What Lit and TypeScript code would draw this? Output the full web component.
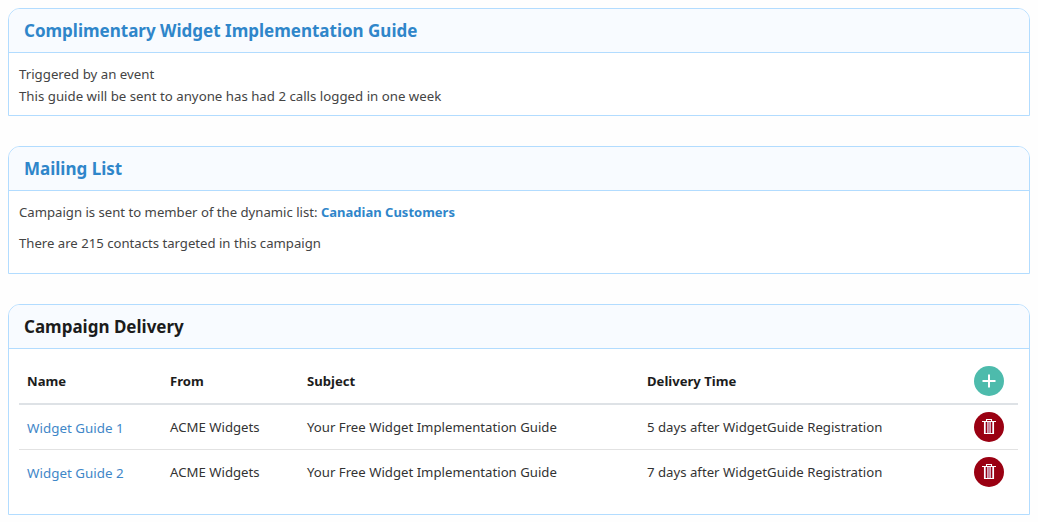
import { LitElement, html, css, svg } from "lit";
import { customElement } from "lit/decorators.js";

const rows = [
  { name: "Widget Guide 1", days: "5 days after WidgetGuide Registration" },
  { name: "Widget Guide 2", days: "7 days after WidgetGuide Registration" },
];

const trash = svg`<rect x="6" y="5" width="8" height="11" fill="#d9a9bd"/><rect x="7" y="5" width="1" height="11" fill="#9a0012"/><rect x="9.5" y="5" width="1" height="11" fill="#b5667f"/><rect x="12" y="5" width="1" height="11" fill="#9a0012"/><path d="M3 4.5H17M7.5 4V2.5H12.5V4M5.5 4.5V16.5H14.5V4.5" fill="none" stroke="#fff" stroke-width="1.1"/>`;

@customElement("app-root")
export class AppRoot extends LitElement {
  static styles = css`
    :host {
      display: block;
      box-sizing: border-box;
      width: 1038px;
      height: 522px;
      padding: 8px 8px 0;
      background: #fefefe;
      font-family: "Noto Sans", "Open Sans", sans-serif;
      font-size: 13.25px;
      color: #444;
      overflow: hidden;
    }
    .panel {
      border: 1px solid #b2dcff;
      border-radius: 12px 12px 0 0;
      background: #fff;
      margin-bottom: 30px;
    }
    .head {
      height: 44px;
      box-sizing: border-box;
      padding-left: 15px;
      display: flex;
      align-items: center;
      background: #f8fbff;
      border-bottom: 1px solid #b2dcff;
      border-radius: 11px 11px 0 0;
      font-size: 17px;
      font-weight: 700;
      color: #2f86ca;
    }
    .head.dark { color: #1c1c1c; }
    .body { padding: 0 10px; box-sizing: border-box; }
    .b1 { height: 62px; padding-top: 10px; line-height: 22px; }
    .b2 { height: 82px; padding-top: 11px; line-height: 21px; font-size: 13.15px; }
    .b2 p { margin: 0 0 10px; }
    .b2 b { color: #2f86ca; font-size: 13px; }
    .b3 { height: 165px; padding: 10px 11px 0 10px; }
    .row {
      display: grid;
      box-sizing: border-box;
      grid-template-columns: 143px 137px 340px 1fr 30px;
      align-items: center;
      padding: 0 14px 0 8px;
      height: 45px;
      border-bottom: 1px solid #e2e2e2;
      color: #333;
      font-size: 13.2px;
    }
    .row.th { height: 46px; border-bottom: 2px solid #dee2e6; font-weight: 700; font-size: 13.1px; color: #1c1c1c; }
    .row.last { border-bottom-color: transparent; }
    a { color: #3f87c8; text-decoration: none; font-size: 13.4px; padding-top: 2px; }
    .btn {
      width: 30px;
      height: 30px;
      border-radius: 50%;
      display: flex;
      align-items: center;
      justify-content: center;
    }
    .add { background: #4dbbac; }
    .del { background: #9a0012; }
    svg { display: block; }
  `;

  render() {
    return html`
      <section class="panel">
        <div class="head">Complimentary Widget Implementation Guide</div>
        <div class="body b1">Triggered by an event<br />This guide will be sent to anyone has had 2 calls logged in one week</div>
      </section>
      <section class="panel">
        <div class="head">Mailing List</div>
        <div class="body b2">
          <p>Campaign is sent to member of the dynamic list: <b>Canadian Customers</b></p>
          <p>There are 215 contacts targeted in this campaign</p>
        </div>
      </section>
      <section class="panel">
        <div class="head dark">Campaign Delivery</div>
        <div class="body b3">
          <div class="row th">
            <span>Name</span><span>From</span><span>Subject</span><span>Delivery Time</span>
            <span class="btn add">
              <svg width="14" height="14" viewBox="0 0 14 14"><path d="M7 0.5V13.5M0.5 7H13.5" stroke="#fff" stroke-width="2"/></svg>
            </span>
          </div>
          ${rows.map(
            (r, i) => html`
              <div class="row ${i === rows.length - 1 ? "last" : ""}">
                <a href="#">${r.name}</a><span>ACME Widgets</span><span>Your Free Widget Implementation Guide</span><span>${r.days}</span>
                <span class="btn del"><svg width="20" height="20" viewBox="0 0 20 20">${trash}</svg></span>
              </div>
            `
          )}
        </div>
      </section>
    `;
  }
}
